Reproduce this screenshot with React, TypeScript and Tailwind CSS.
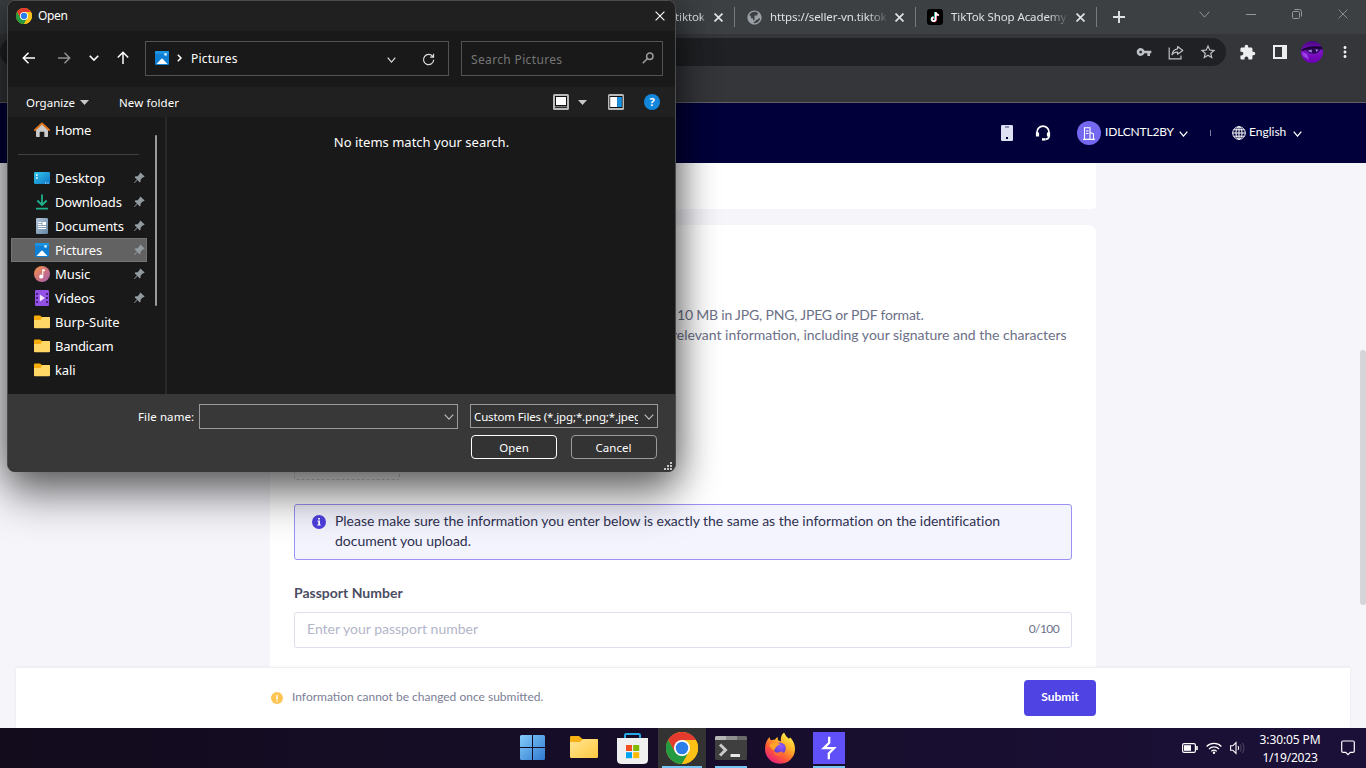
import React from "react";
import { MdVpnKey, MdPublic, MdExtension, MdMoreVert, MdStarBorder } from "react-icons/md";
import { BsPinAngleFill } from "react-icons/bs";

const UI = "font-['Noto_Sans','Open_Sans',sans-serif]";
const WEB = "font-['Lato',sans-serif]";

function ChromeLogo({ size }: { size: number }) {
  return (
    <svg width={size} height={size} viewBox="0 0 48 48" className="block shrink-0">
      <circle cx="24" cy="24" r="24" fill="#fbc116" />
      <path d="M24 12 H44.8 A24 24 0 0 0 3.2 12 L13.6 30 Z" fill="#e33b2e" />
      <path d="M3.2 12 A24 24 0 0 0 24 48 L34.4 30 L24 36 L13.6 30 Z" fill="#249a41" />
      <path d="M24 48 A24 24 0 0 0 44.8 12 H24 L34.4 30 Z" fill="#fbc116" />
      <circle cx="24" cy="24" r="12" fill="#fff" />
      <circle cx="24" cy="24" r="9.4" fill="#2b7de9" />
    </svg>
  );
}

function Chevron({ w = 10, h = 6, sw = 1.2 }: { w?: number; h?: number; sw?: number }) {
  return (
    <svg width={w} height={h} viewBox={`0 0 ${w} ${h}`} fill="none" stroke="currentColor" strokeWidth={sw} className="block shrink-0">
      <path d={`M0.7 0.7 L${w / 2} ${h - 0.9} L${w - 0.7} 0.7`} />
    </svg>
  );
}

function Cross({ size, sw }: { size: number; sw: number }) {
  return (
    <svg width={size} height={size} viewBox="0 0 10 10" stroke="currentColor" strokeWidth={sw} className="block shrink-0">
      <path d="M0.6 0.6 L9.4 9.4 M9.4 0.6 L0.6 9.4" />
    </svg>
  );
}

function PicturesIcon() {
  return (
    <svg width="14" height="14" viewBox="0 0 14 14" className="block shrink-0">
      <rect width="14" height="14" rx="1.2" fill="#0f7fd3" />
      <rect width="14" height="3" rx="1" fill="#1b93e2" />
      <path d="M1.5 13 L6.2 8 Q7 7.2 7.8 8 L12.5 13 Z" fill="#fff" />
      <circle cx="10.5" cy="3.4" r="1.3" fill="#d6f0ff" />
    </svg>
  );
}

function FolderIcon() {
  return (
    <svg width="16" height="14" viewBox="0 0 16 14" className="block shrink-0">
      <path d="M0 1.5 Q0 .5 1 .5 H6 L8 2 H15 Q16 2 16 3 V6 H0 Z" fill="#f5ab0b" />
      <path d="M0 5 H6.5 L8.3 2 H15 Q16 2 16 3 V12.2 Q16 13.2 15 13.2 H1 Q0 13.2 0 12.2 Z" fill="#ffd766" />
    </svg>
  );
}

function HomeIcon() {
  return (
    <svg width="16" height="16" viewBox="0 0 16 16" className="block shrink-0">
      <path d="M2 7.5 L8 2 L14 7.5 V14.2 Q14 15 13.2 15 H10.3 V10.5 Q10.3 9.8 9.6 9.8 H6.4 Q5.7 9.8 5.7 10.5 V15 H2.8 Q2 15 2 14.2 Z" fill="#c9c9c9" />
      <path d="M.9 8 L8 1.4 L15.1 8" fill="none" stroke="#e0761c" strokeWidth="1.9" strokeLinecap="round" strokeLinejoin="round" />
    </svg>
  );
}

function DesktopIcon() {
  return (
    <svg width="16" height="12" viewBox="0 0 16 12" className="block shrink-0">
      <defs>
        <linearGradient id="dk" x1="0" y1="0" x2="1" y2="1">
          <stop offset="0" stopColor="#31c8ea" />
          <stop offset="1" stopColor="#1073c9" />
        </linearGradient>
      </defs>
      <rect width="16" height="12" rx="1.2" fill="url(#dk)" />
      <path d="M2 2.2h1.7v1.6H2zM2 5.2h1.7v1.6H2z" fill="#fff" />
      <path d="M11 10.6h1.2v1H11zM13.4 10.6h1.2v1h-1.2z" fill="#cde8ff" />
    </svg>
  );
}

function DownloadsIcon() {
  return (
    <svg width="14" height="16" viewBox="0 0 14 16" fill="none" stroke="#1db28c" strokeWidth="1.8" className="block shrink-0">
      <path d="M7 .5 V11 M2.3 6.5 L7 11 L11.7 6.5 M1 14.7 H13" />
    </svg>
  );
}

function DocumentsIcon() {
  return (
    <svg width="12" height="16" viewBox="0 0 12 16" className="block shrink-0">
      <defs>
        <linearGradient id="dc" x1="0" y1="0" x2="1" y2="1">
          <stop offset="0" stopColor="#b3c6d8" />
          <stop offset="1" stopColor="#6585a4" />
        </linearGradient>
      </defs>
      <rect width="12" height="16" rx="1.2" fill="url(#dc)" />
      <path d="M2 4.5h3.5M2 6.5h3.5M2 8.500h8M2 10.500h8" stroke="#fff" strokeWidth="1" />
      <rect x="6.5" y="4" width="3.5" height="3" fill="#fff" />
    </svg>
  );
}

function MusicIcon() {
  return (
    <svg width="16" height="16" viewBox="0 0 16 16" className="block shrink-0">
      <defs>
        <linearGradient id="mu" x1="0" y1="0" x2="1" y2="1">
          <stop offset="0.1" stopColor="#f08b4f" />
          <stop offset="1" stopColor="#a45ab4" />
        </linearGradient>
      </defs>
      <circle cx="8" cy="8" r="8" fill="url(#mu)" />
      <path d="M8.2 3.2 L10.9 3.6 V5.3 L9.3 5.1 V10.6 A2 1.9 0 1 1 8.2 8.9 Z" fill="#fff" />
    </svg>
  );
}

function VideosIcon() {
  return (
    <svg width="14" height="16" viewBox="0 0 14 16" className="block shrink-0">
      <rect width="14" height="16" rx="1.2" fill="#9350e4" />
      <path d="M1 3h2v2H1zM1 7h2v2H1zM1 11h2v2H1zM11 3h2v2h-2zM11 7h2v2h-2zM11 11h2v2h-2z" fill="#46217e" />
      <path d="M4.8 4.5 L10 8 L4.8 11.5 Z" fill="#f2e6ff" />
    </svg>
  );
}

const sideItems: { label: string; icon: React.ReactNode; pinned?: boolean; active?: boolean; cls: string }[] = [
  { label: "Desktop", icon: <DesktopIcon />, pinned: true, cls: "tracking-[-0.05px]" },
  { label: "Downloads", icon: <DownloadsIcon />, pinned: true, cls: "tracking-[-0.15px]" },
  { label: "Documents", icon: <DocumentsIcon />, pinned: true, cls: "tracking-[-0.15px]" },
  { label: "Pictures", icon: <PicturesIcon />, pinned: true, active: true, cls: "tracking-[-0.25px]" },
  { label: "Music", icon: <MusicIcon />, pinned: true, cls: "tracking-[-0.1px]" },
  { label: "Videos", icon: <VideosIcon />, pinned: true, cls: "tracking-[-0.1px]" },
  { label: "Burp-Suite", icon: <FolderIcon />, cls: "tracking-[0px]" },
  { label: "Bandicam", icon: <FolderIcon />, cls: "tracking-[-0.3px]" },
  { label: "kali", icon: <FolderIcon />, cls: "tracking-[-0.1px]" },
];

function OpenDialog() {
  return (
    <div
      className={`${UI} absolute left-[7px] top-0 flex h-[472px] w-[669px] flex-col overflow-hidden rounded-[8px] border border-[#4b4c4e] border-b-[#383838] bg-[#191919] text-[13px] text-white shadow-[0_26px_44px_0px_rgba(0,0,0,0.4),0_4px_36px_rgba(0,0,0,0.48)]`}
    >
      <div className="flex h-[30px] shrink-0 items-center bg-[#202020] pl-2 pr-[10px]">
        <ChromeLogo size={16} />
        <span className="ml-[6px] text-[12px] tracking-[-0.35px]">Open</span>
        <div className="ml-auto"><Cross size={10} sw={1.1} /></div>
      </div>

      <div className="flex h-14 shrink-0 items-center pb-[2px] pl-[14px]">
        <svg width="14" height="14" viewBox="0 0 14 14" fill="none" stroke="#fff" strokeWidth="1.5"><path d="M13 7H1.500M6.500 1.800 L1.300 7 L6.500 12.200" /></svg>
        <svg width="14" height="14" viewBox="0 0 14 14" fill="none" stroke="#8f8f8f" strokeWidth="1.5" className="ml-[21px]"><path d="M1 7H12.500M7.500 1.800 L12.700 7 L7.500 12.200" /></svg>
        <span className="ml-[18px]"><Chevron w={10} h={6} sw={1.6} /></span>
        <svg width="14" height="14" viewBox="0 0 14 14" fill="none" stroke="#fff" strokeWidth="1.5" className="ml-[17px]"><path d="M7 13V1.500M1.800 6.500 L7 1.300 L12.200 6.500" /></svg>
        <div className="ml-[15px] flex h-[35px] w-[304px] items-center border border-[#535353] pl-[9px] pr-[13px]">
          <PicturesIcon />
          <svg width="5" height="8" viewBox="0 0 5 8" fill="none" stroke="#fff" strokeWidth="1.5" className="ml-2"><path d="M.8 .8 L4 4 L.8 7.2" /></svg>
          <span className="ml-[9px] mt-px text-[12px] tracking-[0.2px]">Pictures</span>
          <span className="ml-auto mt-[3px] text-[#ddd]"><Chevron w={9} h={6} /></span>
          <svg width="13" height="13" viewBox="0 0 14 14" fill="none" stroke="#ddd" strokeWidth="1.3" className="ml-[26px] mt-[3px]"><path d="M11.8 4.2 A5.5 5.5 0 1 0 12.6 7.2 M12.4 .8 V4.5 H8.8" /></svg>
        </div>
        <div className="ml-3 flex h-[35px] w-[202px] items-center border border-[#535353] pl-[9px] pr-2 text-[#757575]">
          <span className="mt-[3px] text-[12px] tracking-[0.35px]">Search Pictures</span>
          <svg width="12" height="12" viewBox="0 0 12 12" fill="none" stroke="#9a9a9a" strokeWidth="1.5" className="ml-auto"><circle cx="7.8" cy="4.2" r="3.2" /><path d="M5.4 6.6 L.7 11.3" /></svg>
        </div>
      </div>

      <div className="flex h-[30px] shrink-0 items-center bg-[#202020] pl-[18px] text-[12px]">
        <span className="w-[49px] pt-[2px] text-[11.5px]">Organize</span>
        <svg width="9" height="5" viewBox="0 0 9 5" className="ml-[5px]"><path d="M0 0H9L4.5 5Z" fill="#c8c8c8" /></svg>
        <span className="ml-[30px] w-[61px] whitespace-nowrap pt-[2px] text-[11.5px] tracking-[0.1px]">New folder</span>
        <svg width="16" height="16" viewBox="0 0 16 16" className="ml-[373px]"><rect width="16" height="16" rx="1.5" fill="#b9b9b9" /><path d="M2 2h12v12H2z" fill="#111" /><path d="M3 3h10v8H3z" fill="#fff" /><path d="M2 12.3h12v.9H2z" fill="#999" /></svg>
        <svg width="9" height="5" viewBox="0 0 9 5" className="ml-[9px]"><path d="M0 0H9L4.5 5Z" fill="#c8c8c8" /></svg>
        <svg width="16" height="16" viewBox="0 0 16 16" className="ml-[21px]"><rect width="16" height="16" rx="1.5" fill="#b9b9b9" /><path d="M1.500 2h13v12h-13z" fill="#111" /><path d="M2.200 3h7v10h-7z" fill="#fff" /><path d="M9.200 3h4.600v10H9.200z" fill="#1791e2" /></svg>
        <div className="ml-5 flex h-4 w-4 items-center justify-center rounded-full bg-[#1287dc] text-[11px] font-bold leading-4">?</div>
      </div>

      <div className="flex h-[277px] shrink-0">
        <div className="flex w-[139px] shrink-0 flex-col pl-[3px]">
          <div className="flex h-[26px] items-center pl-[23px]">
            <HomeIcon />
            <span className="ml-[5px] pt-px tracking-[-0.2px]">Home</span>
          </div>
          <div className="mb-[11px] ml-[7px] mt-[11px] h-px w-[121px] bg-[#404040]" />
          {sideItems.map((it) => (
            <div key={it.label} className={`flex h-6 items-center ${it.active ? "border border-[#737373] bg-[#626262] pl-[22px] pr-px" : "pl-[23px] pr-[2px]"}`}>
              <div className="flex w-4 justify-center">{it.icon}</div>
              <span className={`ml-[5px] pt-[2px] ${it.cls}`}>{it.label}</span>
              {it.pinned && <BsPinAngleFill size={12} color="#929ba2" className="ml-auto" />}
            </div>
          ))}
        </div>
        <div className="w-[18px] pl-2 pt-[18px]"><div className="h-[171px] w-[2px] rounded-full bg-[#9b9b9b]" /></div>
        <div className="w-[2px] bg-[#292929]" />
        <div className="flex-1 pl-px pt-4 text-center"><span className="tracking-[0.01px]">No items match your search.</span></div>
      </div>

      <div className="flex flex-1 flex-col bg-[#383838] pt-[10px] text-[12px]">
        <div className="flex">
          <span className="ml-[130px] w-[61px] whitespace-nowrap pt-1 text-[11.5px] tracking-[0.1px]">File name:</span>
          <div className="flex h-[25px] w-[259px] items-center justify-end border border-[#9b9b9b] pr-[3px] pt-px text-[#bbb]"><Chevron w={10} h={6} /></div>
          <div className="ml-3 flex h-[24px] w-[188px] items-center border border-[#9b9b9b] bg-[#333] pl-[3px] pr-[3px]">
            <span className="w-[164px] overflow-hidden whitespace-nowrap pt-px text-[11.5px] tracking-[-0.14px]">Custom Files (*.jpg;*.png;*.jpeg</span>
            <span className="ml-auto pt-px text-[#bbb]"><Chevron w={10} h={6} /></span>
          </div>
        </div>
        <div className="flex pl-[463px] pt-[6px] text-[11.5px]">
          <div className="flex h-6 w-[86px] items-center justify-center rounded-[4px] border border-white bg-[#333] pt-[2px]">Open</div>
          <div className="ml-[14px] flex h-6 w-[86px] items-center justify-center rounded-[4px] border border-[#9b9b9b] bg-[#333] pr-px pt-[2px]">Cancel</div>
        </div>
        <svg width="8" height="8" viewBox="0 0 8 8" fill="#c6c6c6" className="ml-auto mr-[3px] mt-[3px] shrink-0"><path d="M6 0h2v2H6zM3 3h2v2H3zM6 3h2v2H6zM0 6h2v2H0zM3 6h2v2H3zM6 6h2v2H6z" /></svg>
      </div>
    </div>
  );
}

function TabTitle({ text, w }: { text: string; w: string }) {
  return (
    <span className={`${w} overflow-hidden whitespace-nowrap [mask-image:linear-gradient(to_right,#000_82%,transparent)]`}>{text}</span>
  );
}

function BrowserChrome() {
  return (
    <div className={`${UI} flex h-[103px] shrink-0 flex-col border-b border-[#5f6164] bg-[#35363a]`}>
      <div className="flex h-[34px] shrink-0 items-center bg-[#3c4043] pl-[675px] text-[11.5px] tracking-[-0.1px] text-[#dfe1e5]">
        <TabTitle text="tiktok" w="w-[31px]" />
        <span className="ml-2"><Cross size={9} sw={1.9} /></span>
        <div className="ml-[11px] h-5 w-px bg-[#77797c]" />
        <MdPublic size={17} color="#9aa0a6" className="ml-[11px] -rotate-90" />
        <span className="ml-[7px] flex"><TabTitle text="https://seller-vn.tiktok" w="w-[119px]" /></span>
        <span className="ml-[6px]"><Cross size={9} sw={1.9} /></span>
        <div className="ml-[11px] h-5 w-px bg-[#77797c]" />
        <svg width="16" height="16" viewBox="0 0 16 16" className="ml-[11px] shrink-0">
          <rect width="16" height="16" rx="3" fill="#000" />
          <g fill="none" strokeWidth="1.7">
            <path d="M8.200 3 V10.100 A1.900 1.900 0 1 1 6.300 8.200 M8.200 3 Q8.600 5.700 11.400 5.900" stroke="#25f4ee" />
            <path d="M9 3.500 V10.600 A1.900 1.900 0 1 1 7.100 8.700 M9 3.500 Q9.400 6.200 12.200 6.400" stroke="#fe2c55" />
            <path d="M8.600 3.200 V10.300 A1.900 1.900 0 1 1 6.700 8.400 M8.600 3.200 Q9 5.900 11.800 6.100" stroke="#fff" />
          </g>
        </svg>
        <span className="ml-2 flex"><TabTitle text="TikTok Shop Academy" w="w-[118px]" /></span>
        <span className="ml-[7px]"><Cross size={9} sw={1.9} /></span>
        <div className="ml-[11px] h-5 w-px bg-[#77797c]" />
        <svg width="12" height="12" viewBox="0 0 12 12" stroke="#e0e2e5" strokeWidth="1.9" className="ml-[16px]"><path d="M6 0V12M0 6H12" /></svg>
        <div className="mb-[6px] ml-auto flex items-center pr-[18px] text-[#94979a]">
          <Chevron w={11} h={7} sw={1} />
          <div className="ml-9 h-px w-[10px] bg-current" />
          <svg width="10" height="10" viewBox="0 0 10 10" fill="none" stroke="currentColor" className="ml-9"><rect x=".5" y="2.5" width="7" height="7" rx="1" /><path d="M2.500 .5 H7.500 Q9.500 .5 9.500 2.500 V7.500" /></svg>
          <span className="ml-9"><Cross size={10} sw={0.9} /></span>
        </div>
      </div>
      <div className="flex h-9 items-center">
        <div className="flex h-7 w-[1226px] shrink-0 items-center justify-end rounded-full bg-[#202124] pr-[9px] text-[#bdc1c6]">
          <MdVpnKey size={16} />
          <svg width="16" height="15" viewBox="0 0 16 15" fill="none" stroke="currentColor" strokeWidth="1.2" className="ml-[16px]">
            <path d="M1.2 2.5 V13.8 H13 V10.5" />
            <path d="M9.6 1.5 L14.8 5.4 L9.6 9.3 V7.1 Q5.8 7 4 9.8 Q4.6 4.4 9.6 3.8 Z" strokeLinejoin="round" />
          </svg>
          <MdStarBorder size={18} className="ml-[15px]" />
        </div>
        <MdExtension size={17} color="#eceef0" className="ml-[13px] shrink-0" />
        <svg width="14" height="14" viewBox="0 0 14 14" className="ml-[17px] shrink-0"><path d="M0 0H14V14H0Z M2 2V12H9V2Z" fill="#eceef0" fillRule="evenodd" /></svg>
        <svg width="22" height="22" viewBox="0 0 22 22" className="ml-[14px] shrink-0">
          <defs>
            <clipPath id="av"><circle cx="11" cy="11" r="11" /></clipPath>
            <linearGradient id="avg" x1="0" y1="0" x2="0" y2="1"><stop offset="0" stopColor="#4a0783" /><stop offset=".5" stopColor="#7c12c4" /><stop offset="1" stopColor="#6c00b4" /></linearGradient>
          </defs>
          <g clipPath="url(#av)">
            <rect width="22" height="22" fill="url(#avg)" />
            <path d="M0 9 Q6 4 22 5.5 V8.5 Q13 6.5 1 10Z" fill="#1b0335" />
            <path d="M5 10 Q11 5.5 19 8 Q18 12.5 12.5 12.8 Q8 12.5 5 10Z" fill="#2b0855" />
            <path d="M6.500 10 L10.500 8.600 L11 11.600 Z M14.500 8.300 L17.400 8.800 L15.400 11 Z" fill="#a98af0" />
            <path d="M1 11 L6 13 L8 19 L2 15 Z" fill="#9b42e6" />
          </g>
        </svg>
        <MdMoreVert size={18} color="#eceef0" className="ml-[13px] shrink-0" />
      </div>
    </div>
  );
}

function SiteHeader() {
  return (
    <div className={`${WEB} flex h-[60px] shrink-0 items-center justify-end bg-[#02003a] pr-[64px] text-[12px] text-white`}>
      <svg width="12" height="16" viewBox="0 0 12 16"><rect width="12" height="16" rx="1.2" fill="#dde1f2" /><path d="M4 1h4v2H4z" fill="#8c8eb5" /><path d="M5 12h2v2H5z" fill="#02003a" /></svg>
      <svg width="16" height="16" viewBox="0 0 16 16" fill="none" stroke="#fff" strokeWidth="1.7" className="ml-[22px]">
        <path d="M2 8 V7.200 A6 6 0 0 1 14 7.200 V11 Q14 14 10.500 14.300" />
        <path d="M2.500 7.600 V11.400 M13.500 7.600 V11.400" strokeWidth="3.2" />
        <path d="M7 14.400 H10.400" strokeWidth="2.4" />
      </svg>
      <div className="ml-[26px] flex h-6 w-6 items-center justify-center rounded-full bg-[#7468f0]">
        <svg width="12" height="13" viewBox="0 0 12 13" fill="none" stroke="#fff" strokeWidth="1.1"><path d="M0 12.4H12M1.5 12V.8H7V12M7 5.5L10.5 6.8V12M3 4H5.500M3 6.500H5.500" /></svg>
      </div>
      <span className="ml-1 w-[69px] whitespace-nowrap pb-[2px] tracking-[-0.18px]">IDLCNTL2BY</span>
      <span className="ml-[5px] mt-px"><Chevron w={9} h={6} sw={1.3} /></span>
      <div className="ml-[22px] h-[6px] w-px bg-[#7d7b9c]" />
      <svg width="14" height="14" viewBox="0 0 14 14" fill="none" stroke="#fff" strokeWidth="1" className="ml-[21px]"><circle cx="7" cy="7" r="6.3" /><ellipse cx="7" cy="7" rx="3" ry="6.3" /><path d="M.7 7H13.3M7 .7V13.3M1.6 3.8H12.4M1.6 10.2H12.4" /></svg>
      <span className="ml-[3px] w-[38px] whitespace-nowrap pb-[2px]">English</span>
      <span className="ml-[6px] mt-px"><Chevron w={9} h={6} sw={1.3} /></span>
    </div>
  );
}

function PageBody() {
  return (
    <div className={`${WEB} flex h-[565px] shrink-0 flex-col overflow-hidden bg-[#f6f5fa]`}>
      <div className="flex h-[504px]">
        <div className="ml-[270px] flex w-[826px] flex-col">
          <div className="h-[46px] shrink-0 rounded-b-[4px] bg-white" />
          <div className="mt-4 flex flex-1 flex-col rounded-t-[8px] bg-white px-6 pt-[80px] text-[14px]">
            <div className="pl-[383px] leading-5 text-[#6c7088]">
              <p className="whitespace-nowrap tracking-[-0.19px]">10 MB in JPG, PNG, JPEG or PDF format.</p>
              <p className="-ml-[5px] whitespace-nowrap">relevant information, including your signature and the characters</p>
            </div>
            <div className="h-[135px] w-[106px] rounded-[3px] border border-dashed border-[#d0d2de]" />
            <div className="mt-6 flex h-14 items-start rounded-[3px] border border-[#9a92f5] bg-[#f4f4ff] pl-[17px] pt-[6px]">
              <div className="mt-1 flex h-[14px] w-[14px] items-center justify-center rounded-full bg-[#4f40de]">
                <svg width="4" height="8" viewBox="0 0 4 8" fill="#fff"><path d="M1 0h2v1.600H1zM.4 2.600H3v4h.8v1H.3v-1h.9v-3H.4z" /></svg>
              </div>
              <p className="ml-[9px] w-[700px] leading-5 tracking-[-0.028px] text-[#2e3150]">
                Please make sure the information you enter below is exactly the same as the information on the identification<br />document you upload.
              </p>
            </div>
            <div className="mt-[23px] font-bold leading-5 text-[#4b4e63]">Passport Number</div>
            <div className="mt-[9px] flex h-9 shrink-0 items-center justify-between rounded-[3px] border border-[#dcdfed] px-3">
              <span className="pb-[3px] text-[#b3b6c9]">Enter your passport number</span>
              <span className="pb-[2px] text-[12px] tracking-[-0.6px] text-[#6c7088]">0/100</span>
            </div>
          </div>
        </div>
        <div className="ml-auto w-[6px] pt-[187px]"><div className="h-[255px] rounded-full bg-[#d4d4d9]" /></div>
      </div>
      <div className="mx-4 flex flex-1 items-center border-t border-[#eeeef3] bg-white pl-[255px] pr-[254px] shadow-[0_0_3px_rgba(0,0,0,0.06)]">
        <div className="flex h-3 w-3 items-center justify-center rounded-full bg-[#ffc554]">
          <svg width="2" height="7" viewBox="0 0 2 7" fill="#fff"><path d="M.3 0h1.4v4.4H.3zM.3 5.4h1.4v1.4H.3z" /></svg>
        </div>
        <span className="ml-[9px] pb-[2px] text-[12px] text-[#7b7e96]">Information cannot be changed once submitted.</span>
        <div className="ml-auto flex h-9 w-[72px] items-center justify-center rounded-[4px] bg-[#4f43e4] pb-[2px] text-[12px] font-bold text-white">Submit</div>
      </div>
    </div>
  );
}

function WindowsLogo() {
  return (
    <svg width="25" height="25" viewBox="0 0 25 25" className="block">
      <defs><linearGradient id="wl" x1="0" y1="0" x2="1" y2="1"><stop offset="0" stopColor="#83cdfb" /><stop offset="1" stopColor="#2f79cf" /></linearGradient></defs>
      <path d="M1.500 0H12V12H0V1.500Q0 0 1.500 0ZM13 0H23.500Q25 0 25 1.500V12H13ZM0 13H12V25H1.500Q0 25 0 23.500ZM13 13H25V23.500Q25 25 23.500 25H13Z" fill="url(#wl)" />
    </svg>
  );
}

function ExplorerLogo() {
  return (
    <svg width="28" height="22" viewBox="0 0 28 22" className="block">
      <defs><linearGradient id="ex" x1="0" y1="0" x2="1" y2="1"><stop offset="0" stopColor="#ffe694" /><stop offset="1" stopColor="#ffc93f" /></linearGradient></defs>
      <path d="M0 1.2Q0 0 1.2 0H9L12.5 3H26.8Q28 3 28 4.2V10H0Z" fill="#f8b015" />
      <path d="M0 6H10L13 3H26.8Q28 3 28 4.2V20.8Q28 22 26.8 22H1.2Q0 22 0 20.8Z" fill="url(#ex)" />
    </svg>
  );
}

function StoreLogo() {
  return (
    <svg width="31" height="31" viewBox="0 0 31 31" className="block">
      <path d="M8 5.5V2.2Q8 1 9.2 1H21.8Q23 1 23 2.2V5.5" fill="none" stroke="#24a9e8" strokeWidth="2" />
      <path d="M0 5H31V26.5Q31 31 26.5 31H4.5Q0 31 0 26.5Z" fill="#f0f0f0" />
      <path d="M9 12h6v6H9z" fill="#f25022" /><path d="M16.2 12h6v6h-6z" fill="#7fba00" /><path d="M9 19.2h6v6H9z" fill="#00a4ef" /><path d="M16.2 19.2h6v6h-6z" fill="#ffb900" />
    </svg>
  );
}

function TerminalLogo() {
  return (
    <svg width="32" height="24" viewBox="0 0 32 24" className="block">
      <rect width="32" height="24" rx="1.5" fill="#3f3f3f" />
      <path d="M0 4V1.500Q0 0 1.500 0H11V4Z" fill="#b6b6b6" /><path d="M11 0h11v4H11z" fill="#909090" /><path d="M22 0h8.500Q32 0 32 1.500V4H22Z" fill="#6a6a6a" />
      <path d="M5 8.500L10.500 14L5 19.500" fill="none" stroke="#c9c9c9" strokeWidth="3" />
      <rect x="15.500" y="18" width="9.500" height="3" rx=".6" fill="#e6e6e6" />
    </svg>
  );
}

function FirefoxLogo() {
  return (
    <svg width="32" height="32" viewBox="0 0 32 32" className="block">
      <defs>
        <linearGradient id="ff" x1=".85" y1="0.05" x2=".2" y2="1"><stop offset="0" stopColor="#fff44f" /><stop offset=".35" stopColor="#ffb128" /><stop offset=".65" stopColor="#ff5a36" /><stop offset="1" stopColor="#e31587" /></linearGradient>
        <radialGradient id="fp" cx=".6" cy=".3" r=".8"><stop offset="0" stopColor="#9059ff" /><stop offset="1" stopColor="#5b3bc4" /></radialGradient>
      </defs>
      <path d="M20 .5Q21.500 4 24.500 6.500Q25.500 6.800 26.300 5.500Q31 10.500 31 17A15 14.700 0 0 1 1 17Q1 9.500 5.500 5Q5.800 7.200 7 8.200Q8.500 7.500 10.800 7.800Q12 5.500 14 5Q13 7 14.500 8.500Q16 9 17 9.500Q16 3.500 20 .5Z" fill="url(#ff)" />
      <circle cx="15.800" cy="16.500" r="6" fill="url(#fp)" />
      <path d="M5 13.500Q8 10 12.500 11Q15.500 10.500 16.500 12.500Q13 13 12.500 15Q10.500 16 10.300 18.500Q7.500 17 5 13.500Z" fill="#ffa42b" />
      <path d="M9.400 18Q11.500 22 15.500 20Q17.500 18.800 19.500 20.300Q18.500 24 14 24Q9.800 23 9.400 18Z" fill="#ff6d36" />
    </svg>
  );
}

function Taskbar() {
  return (
    <div className={`${UI} flex h-10 shrink-0 items-center bg-linear-to-r from-[#120c1d] via-[#170d2a] to-[#1b1038] pl-[520px] pr-[11px] text-white`}>
      <div className="-mt-px"><WindowsLogo /></div>
      <div className="-mt-[2px] ml-[25px]"><ExplorerLogo /></div>
      <div className="ml-[19px] mt-px"><StoreLogo /></div>
      <div className="ml-[10px] flex h-10 w-12 flex-col items-center bg-[#333] pt-1"><ChromeLogo size={32} /><div className="mt-[2px] h-[2px] w-10 bg-[#76c5f5]" /></div>
      <div className="ml-[9px] flex h-10 w-8 flex-col pt-2"><TerminalLogo /><div className="mt-[6px] h-[2px] bg-[#76c5f5]" /></div>
      <div className="-mt-px ml-[17px]"><FirefoxLogo /></div>
      <div className="ml-[17px] flex h-10 w-8 flex-col pt-1">
        <svg width="32" height="32" viewBox="0 0 32 32" className="block">
          <rect width="32" height="32" fill="#5f50f7" />
          <path d="M16.200 4.800V10.800L10.800 16.200H21L15.800 21.400V27.200" fill="none" stroke="#fff" strokeWidth="2.300" strokeLinejoin="miter" />
        </svg>
        <div className="mt-[2px] h-[2px] bg-[#76c5f5]" />
      </div>
      <div className="ml-auto flex items-center">
        <svg width="16" height="10" viewBox="0 0 16 10" fill="none" stroke="#fff"><rect x=".6" y=".6" width="12.800" height="8.800" rx="1.500" strokeWidth="1.200" /><path d="M2 2.200h7v5.600H2z" fill="#fff" stroke="none" /><path d="M15 3v4" strokeWidth="1.600" /></svg>
        <svg width="16" height="12" viewBox="0 0 16 12" fill="none" stroke="#fff" strokeWidth="1.200" className="ml-2"><path d="M.6 4.500A10.500 10.500 0 0 1 15.400 4.500M3 7A7 7 0 0 1 13 7M5.300 9.300A3.800 3.800 0 0 1 10.700 9.300" /><circle cx="8" cy="10.700" r="1.200" fill="#fff" stroke="none" /></svg>
        <svg width="16" height="14" viewBox="0 0 16 14" fill="none" stroke="#fff" strokeWidth="1.100" className="ml-2"><path d="M.6 4.800H2.800L6 1.600V12.400L2.800 9.200H.6Z" /><path d="M8 5Q9.400 7 8 9" /><path d="M10 3.300Q12.400 7 10 10.700M12.400 1.800Q15.600 7 12.400 12.200" stroke="#4a4160" /></svg>
        <div className="ml-[13px] mt-[2px] w-[62px] whitespace-nowrap text-center text-[12px] leading-[18px] tracking-[-0.12px]"><div>3:30:05 PM</div><div className="tracking-[-0.2px]">1/19/2023</div></div>
        <svg width="14" height="16" viewBox="0 0 14 16" fill="none" stroke="#fff" strokeWidth="1.200" className="ml-5"><path d="M2 1H12Q13.300 1 13.300 2.300V11Q13.300 12.300 12 12.300H9.300L7 14.600L4.700 12.300H2Q.7 12.300 .7 11V2.300Q.7 1 2 1Z" /></svg>
      </div>
    </div>
  );
}

export default function App() {
  return (
    <div className="relative flex h-[768px] w-[1366px] flex-col overflow-hidden">
      <BrowserChrome />
      <SiteHeader />
      <PageBody />
      <Taskbar />
      <OpenDialog />
    </div>
  );
}
